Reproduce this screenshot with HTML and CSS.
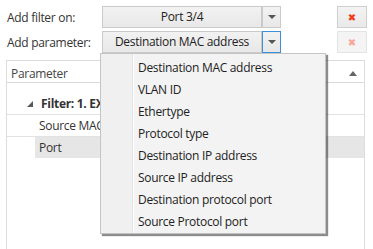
FILE: index.html
```html
<!DOCTYPE html>
<html lang="en">
<head>
    <meta charset="UTF-8">
    <title>Filter editor</title>
    <link rel="stylesheet" href="styles.css">
</head>
<body>
    <div class="page">
        <div class="form-row">
            <span class="label">Add filter on:</span>
            <div class="combo">
                <div class="combo-main">Port 3/4</div>
                <div class="combo-arrow"><span class="caret"></span></div>
            </div>
            <button class="remove-btn">&#10006;</button>
        </div>
        <div class="form-row">
            <span class="label">Add parameter:</span>
            <div class="combo">
                <div class="combo-main">Destination MAC address</div>
                <div class="combo-arrow focused"><span class="caret"></span></div>
            </div>
            <button class="remove-btn disabled">&#10006;</button>

            <div class="dropdown">
                <div class="dropdown-item">Destination MAC address</div>
                <div class="dropdown-item">VLAN ID</div>
                <div class="dropdown-item">Ethertype</div>
                <div class="dropdown-item">Protocol type</div>
                <div class="dropdown-item">Destination IP address</div>
                <div class="dropdown-item">Source IP address</div>
                <div class="dropdown-item">Destination protocol port</div>
                <div class="dropdown-item">Source Protocol port</div>
            </div>
        </div>

        <div class="grid">
            <div class="grid-header">
                <span>Parameter</span>
                <span class="sort-arrow"></span>
            </div>
            <div class="grid-row group-row">
                <svg class="expander" width="6" height="6" viewBox="0 0 6 6"><path d="M6 0 L6 6 L0 6 Z" fill="#595959"/></svg>
                <span class="group-title">Filter: 1. EX</span>
            </div>
            <div class="grid-row child-row"><span class="cell">Source MAC</span></div>
            <div class="grid-row child-row selected"><span class="cell">Port</span></div>
        </div>
    </div>
</body>
</html>
```

FILE: styles.css
```css
body {
    margin: 0;
    background: #fff;
    font-family: "Open Sans", sans-serif;
    font-size: 12px;
    letter-spacing: -0.3px;
    color: #333;
}
.page {
    padding: 6px 0 0 6px;
    height: 243px;
    overflow: hidden;
}
.form-row {
    display: flex;
    align-items: center;
    height: 22px;
    margin-bottom: 3px;
    position: relative;
}
.label {
    width: 95px;
    padding-left: 1px;
}
.combo {
    display: flex;
    width: 179px;
    height: 22px;
}
.combo-main {
    flex: 1;
    border: 1px solid #cacaca;
    background: linear-gradient(#f2f2f2, #e8e8e8);
    text-align: center;
    line-height: 20px;
    color: #222;
}
.combo-arrow {
    width: 17px;
    border: 1px solid #cacaca;
    background: linear-gradient(#f2f2f2, #e8e8e8);
    display: flex;
    justify-content: center;
    align-items: center;
}
.combo-arrow.focused {
    border-color: #3c8fd8;
}
.caret {
    width: 0;
    height: 0;
    border-left: 4px solid transparent;
    border-right: 4px solid transparent;
    border-top: 4px solid #555;
}
.remove-btn {
    margin-left: 56px;
    width: 30px;
    height: 22px;
    padding: 0;
    border: 1px solid #cfcfcf;
    background: linear-gradient(#f3f3f3, #e9e9e9);
    color: #f03c16;
    font-size: 10px;
    font-weight: bold;
    font-family: "DejaVu Sans", sans-serif;
}
.remove-btn.disabled {
    background: #f4f4f4;
    border-color: #e4e4e4;
    color: #f7a794;
}
.dropdown {
    position: absolute;
    top: 22px;
    left: 94px;
    width: 224px;
    padding: 3px 0 0 0;
    background: linear-gradient(90deg, #f0f0f0 31px, #e2e2e2 31px, #e2e2e2 32px, #fff 32px, #fff 33px, #f3f3f3 33px);
    border: 1px solid #c4c4c4;
    box-shadow: 2px 2px 1px rgba(0, 0, 0, 0.45);
    z-index: 10;
}
.dropdown-item {
    height: 22px;
    line-height: 22px;
    padding-left: 37px;
    color: #222;
}
.grid {
    margin-top: 7px;
    width: 357px;
    height: 200px;
    border: 1px solid #dcdcdc;
    border-bottom: none;
}
.grid-header {
    display: flex;
    justify-content: space-between;
    align-items: center;
    padding: 3px 7px 0 4px;
    box-sizing: border-box;
    height: 22px;
    border-bottom: 1px solid #dcdcdc;
    color: #444;
}
.sort-arrow {
    width: 0;
    height: 0;
    border-left: 4px solid transparent;
    border-right: 4px solid transparent;
    border-bottom: 5px solid #666;
}
.grid-row {
    display: flex;
    align-items: center;
    border-bottom: 1px solid #e2e2e2;
}
.group-row {
    box-sizing: border-box;
    height: 32px;
    padding-top: 10px;
    padding-left: 20px;
}
.expander {
    margin-right: 8px;
}
.group-title {
    font-weight: bold;
    color: #333;
}
.child-row {
    height: 21px;
    padding-left: 28px;
    align-items: stretch;
}
.cell {
    flex: 1;
    display: flex;
    align-items: center;
    padding-left: 4px;
}
.child-row.selected {
    border-bottom: none;
}
.child-row.selected .cell {
    background: #e6e6e6;
}
```
